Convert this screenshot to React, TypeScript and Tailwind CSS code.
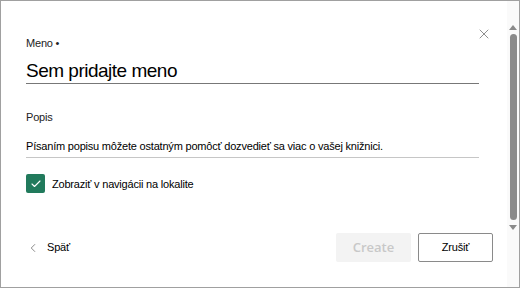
import { X, ChevronLeft, Check } from 'lucide-react'

const font = { fontFamily: '"Liberation Sans", Arial, sans-serif' }

function Scrollbar() {
  return (
    <div className="w-[12px] flex flex-col items-center pt-[24px] pb-[57px] bg-[#fafafa]">
      <div className="w-0 h-0 border-l-[4px] border-r-[4px] border-b-[5px] border-l-transparent border-r-transparent border-b-[#8a8a8a]" />
      <div className="mt-[4px] w-[7px] flex-1 rounded-full bg-[#8a8a8a]" />
      <div className="mt-[5px] w-0 h-0 border-l-[4px] border-r-[4px] border-t-[5px] border-l-transparent border-r-transparent border-t-[#8a8a8a]" />
    </div>
  )
}

export default function App() {
  return (
    <div
      className="w-[520px] h-[288px] bg-white border border-[#a0a0a0] flex text-black overflow-hidden"
      style={font}
    >
      <div className="flex-1 flex flex-col pl-[25px] pr-[28px]">
        <div className="h-[34px] flex justify-end items-start pt-[25px] -mr-[13px]">
          <X size={16} strokeWidth={1.1} className="text-[#666]" />
        </div>
        <label className="text-[11px] leading-[16px] tracking-[-0.2px] text-[#222]">Meno •</label>
        <div className="mt-[8px] text-[19px] leading-[24px] tracking-[-0.5px] border-b border-[#777]">
          Sem pridajte meno
        </div>

        <label className="mt-[25px] text-[11px] leading-[16px] tracking-[-0.2px] text-[#222]">Popis</label>
        <div className="mt-[13px] text-[11px] leading-[16px] tracking-[-0.2px] pb-[3px] border-b border-[#c6c6c6]">
          Písaním popisu môžete ostatným pomôcť dozvedieť sa viac o vašej knižnici.
        </div>

        <div className="mt-[16px] flex items-center gap-[7px]">
          <div className="w-[19px] h-[19px] rounded-[2px] bg-[#217a5c] flex items-center justify-center">
            <Check size={12} strokeWidth={2.2} className="text-white" />
          </div>
          <span className="text-[11px] leading-[16px] tracking-[-0.2px]">Zobraziť v navigácii na lokalite</span>
        </div>

        <div className="mt-auto mb-[25px] flex items-center">
          <div className="flex items-center gap-[7px]">
            <ChevronLeft size={14} strokeWidth={1.3} className="text-[#666]" />
            <span className="text-[11px] tracking-[-0.2px]">Späť</span>
          </div>
          <div className="ml-auto flex gap-[7px] -mr-[14px]">
            <button
              className="w-[75px] h-[29px] rounded-[2px] bg-[#f3f3f3] text-[#c8c8c8] text-[13px] font-semibold"
              style={{ fontFamily: '"Open Sans", sans-serif' }}
            >
              Create
            </button>
            <button className="w-[75px] h-[29px] rounded-[2px] border border-[#8a8a8a] bg-white text-[11px] tracking-[-0.2px]">
              Zrušiť
            </button>
          </div>
        </div>
      </div>
      <Scrollbar />
    </div>
  )
}
